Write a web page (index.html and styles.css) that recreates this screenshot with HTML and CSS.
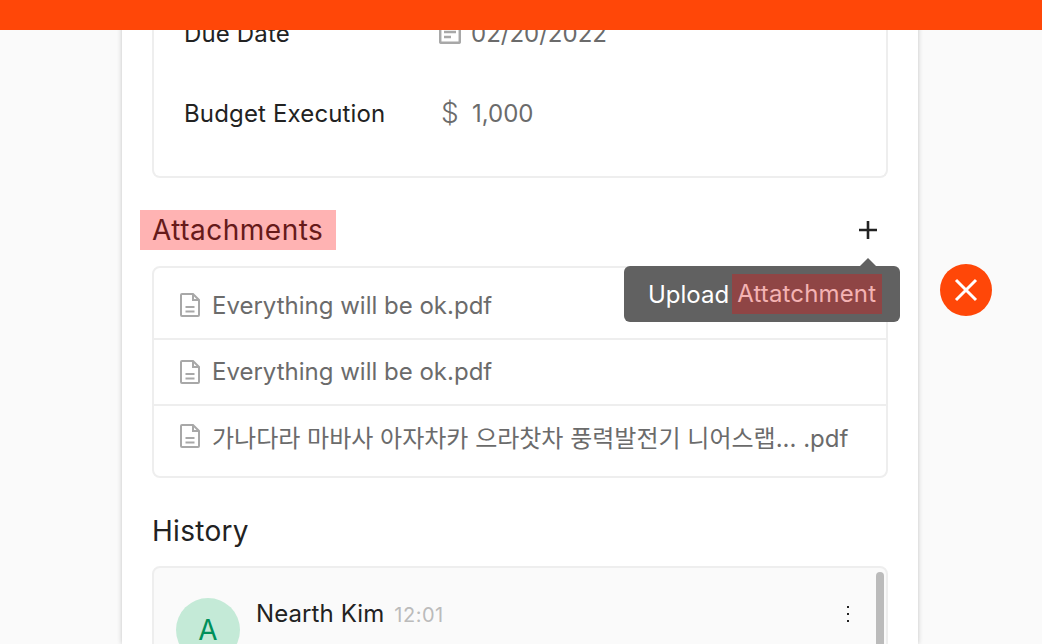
FILE: index.html
```html
<!DOCTYPE html>
<html lang="en">
<head>
    <meta charset="utf-8">
    <title>Task Detail</title>
    <link rel="stylesheet" href="styles.css">
</head>
<body>
    <header class="topBar"></header>
    <div class="stage">
        <main class="panel">
            <section class="infoCard">
                <div class="infoRow">
                    <span class="infoLabel">Due Date</span>
                    <span class="infoValue">
                        <svg class="infoIcon" viewBox="0 0 22 22" width="22" height="22" fill="none" stroke="#a8a8a8" stroke-width="2.500">
                            <rect x="1.200" y="1.200" width="19.600" height="19.600" rx="1"/>
                            <path d="M5 10h12M5 15h7"/>
                        </svg>
                        02/20/2022
                    </span>
                </div>
                <div class="infoRow">
                    <span class="infoLabel">Budget Execution</span>
                    <span class="infoValue"><span class="dollar">$</span>1,000</span>
                </div>
            </section>

            <div class="sectionHead">
                <h2 class="sectionTitle"><span class="titleMark">Attachments</span></h2>
                <button class="addButton" type="button">
                    <svg viewBox="0 0 20 20" width="20" height="20" fill="none" stroke="#222" stroke-width="2.600">
                        <path d="M10 1v18M1 10h18"/>
                    </svg>
                </button>
            </div>

            <ul class="fileList">
                <li class="fileItem">
                    <svg class="fileIcon" viewBox="0 0 20 24" width="20" height="24" fill="none" stroke="#a8a8a8" stroke-width="2">
                        <path d="M2 1h11l6 6v15a1 1 0 0 1-1 1H2a1 1 0 0 1-1-1V2a1 1 0 0 1 1-1zM13 1v6h6M5.500 14h9M5.500 18.500h9"/>
                    </svg>
                    Everything will be ok.pdf
                </li>
                <li class="fileItem">
                    <svg class="fileIcon" viewBox="0 0 20 24" width="20" height="24" fill="none" stroke="#a8a8a8" stroke-width="2">
                        <path d="M2 1h11l6 6v15a1 1 0 0 1-1 1H2a1 1 0 0 1-1-1V2a1 1 0 0 1 1-1zM13 1v6h6M5.500 14h9M5.500 18.500h9"/>
                    </svg>
                    Everything will be ok.pdf
                </li>
                <li class="fileItem">
                    <svg class="fileIcon" viewBox="0 0 20 24" width="20" height="24" fill="none" stroke="#a8a8a8" stroke-width="2">
                        <path d="M2 1h11l6 6v15a1 1 0 0 1-1 1H2a1 1 0 0 1-1-1V2a1 1 0 0 1 1-1zM13 1v6h6M5.500 14h9M5.500 18.500h9"/>
                    </svg>
                    가나다라 마바사 아자차카 으라찻차 풍력발전기 니어스랩... .pdf
                </li>
            </ul>

            <h2 class="historyTitle">History</h2>
            <section class="historyCard">
                <div class="avatar">A</div>
                <div class="historyMeta">
                    <span class="historyName">Nearth Kim</span>
                    <span class="historyTime">12:01</span>
                </div>
                <div class="moreDots"><i></i><i></i><i></i></div>
                <div class="scrollThumb"></div>
            </section>

            <!-- tooltip sits over the list -->
            <div class="tooltip"><span>Upload</span><span class="tooltipMark">Attatchment</span></div>
        </main>

        <button class="closeButton" type="button">
            <svg viewBox="0 0 24 24" width="24" height="24" fill="none" stroke="#fff" stroke-width="3">
                <path d="M2 2l20 20M22 2L2 22"/>
            </svg>
        </button>
    </div>
</body>
</html>
```

FILE: styles.css
```css
* {
    box-sizing: border-box;
}

html, body {
    height: 100%;
}

body {
    margin: 0;
    overflow: hidden;
    background-color: #fafafa;
    color: #222;
    font-family: Inter, "Noto Sans CJK KR", sans-serif;
    font-size: 24px;
}

.topBar {
    position: fixed;
    top: 0;
    left: 0;
    right: 0;
    height: 30px;
    background-color: #ff4708;
    z-index: 5;
}

.stage {
    display: flex;
    align-items: flex-start;
    height: 100%;
    margin-left: 116px;
    padding-left: 6px;
    overflow: hidden;
}

.panel {
    position: relative;
    flex: none;
    width: 796px;
    height: 744px;
    margin-top: -100px;
    padding: 0 30px;
    background-color: white;
    box-shadow: 0 0 5px rgba(0, 0, 0, 0.22);
}

.infoCard {
    height: 278px;
    padding: 113px 30px 0 30px;
    border: 2px solid #eee;
    border-top: 0;
    border-radius: 0 0 8px 8px;
}

.infoRow {
    display: flex;
    align-items: center;
    height: 40px;
    margin-bottom: 40px;
}

.infoLabel {
    width: 256px;
    font-weight: 440;
    letter-spacing: 0.15px;
}

.infoValue {
    display: flex;
    align-items: center;
    color: #6b6b6b;
}

.infoIcon {
    margin-right: 10px;
    margin-left: -1px;
}

.dollar {
    width: 32px;
    padding-left: 1px;
    font-size: 28px;
    font-weight: 300;
}

.sectionHead {
    display: flex;
    align-items: center;
    justify-content: space-between;
    height: 40px;
    margin-top: 32px;
}

.sectionTitle, .historyTitle {
    margin: 0;
    font-size: 28px;
    font-weight: 400;
    line-height: 40px;
    letter-spacing: 0.3px;
}

.titleMark {
    display: inline-block;
    margin-left: -12px;
    padding: 0 13px 0 12px;
    background-color: #ffb3b3;
    color: #661a1a;
    letter-spacing: 0.5px;
}

.addButton {
    display: flex;
    margin-right: 10px;
    padding: 0;
    border: 0;
    background: none;
}

.fileList {
    margin: 16px 0 0;
    padding: 0;
    list-style: none;
    border: 2px solid #eee;
    border-radius: 8px;
}

.fileItem {
    display: flex;
    align-items: center;
    height: 66px;
    padding-left: 26px;
    padding-bottom: 1px;
    border-bottom: 2px solid #eee;
    color: #6b6b6b;
}

.fileItem:first-child {
    height: 72px;
    padding-top: 4px;
    padding-bottom: 0;
}

.fileItem:last-child {
    height: 70px;
    padding-bottom: 10px;
    border-bottom: 0;
}

.fileIcon {
    margin-right: 12px;
}

.historyTitle {
    margin-top: 33px;
}

.historyCard {
    position: relative;
    display: flex;
    height: 200px;
    margin-top: 15px;
    padding: 30px 22px;
    background-color: #fafafa;
    border: 2px solid #eee;
    border-radius: 8px;
}

.avatar {
    flex: none;
    width: 64px;
    height: 64px;
    margin-right: 16px;
    border-radius: 50%;
    background-color: #c4ead7;
    color: #00905a;
    font-size: 28px;
    line-height: 64px;
    text-align: center;
}

.historyMeta {
    display: flex;
    align-items: baseline;
    gap: 10px;
    margin-top: 1px;
}

.historyName {
    letter-spacing: 0.1px;
}

.historyTime {
    color: #bbb;
    font-size: 20px;
    letter-spacing: 0.5px;
}

.moreDots {
    display: flex;
    flex-direction: column;
    gap: 5px;
    margin: 8px 0 0 auto;
    padding-right: 15px;
}

.moreDots i {
    width: 2px;
    height: 2px;
    background-color: #222;
}

.scrollThumb {
    position: absolute;
    top: 4px;
    right: 2px;
    width: 8px;
    height: 190px;
    border-radius: 4px;
    background-color: #bbb;
}

.tooltip {
    position: absolute;
    top: 366px;
    left: 502px;
    display: flex;
    align-items: center;
    gap: 3px;
    width: 276px;
    height: 56px;
    padding-left: 24px;
    border-radius: 6px;
    background-color: #616161;
    color: white;
}

.tooltip::before {
    content: "";
    position: absolute;
    top: -8px;
    left: 236px;
    border-left: 8px solid transparent;
    border-right: 8px solid transparent;
    border-bottom: 8px solid #616161;
}

.tooltipMark {
    display: inline-block;
    height: 40px;
    padding: 0 6px 0 5px;
    background-color: #8f4545;
    color: #f4b3b3;
    line-height: 40px;
    letter-spacing: 0.15px;
}

.closeButton {
    flex: none;
    display: flex;
    align-items: center;
    justify-content: center;
    width: 52px;
    height: 52px;
    margin: 264px 0 0 22px;
    padding: 0;
    border: 0;
    border-radius: 50%;
    background-color: #ff4708;
}
```
